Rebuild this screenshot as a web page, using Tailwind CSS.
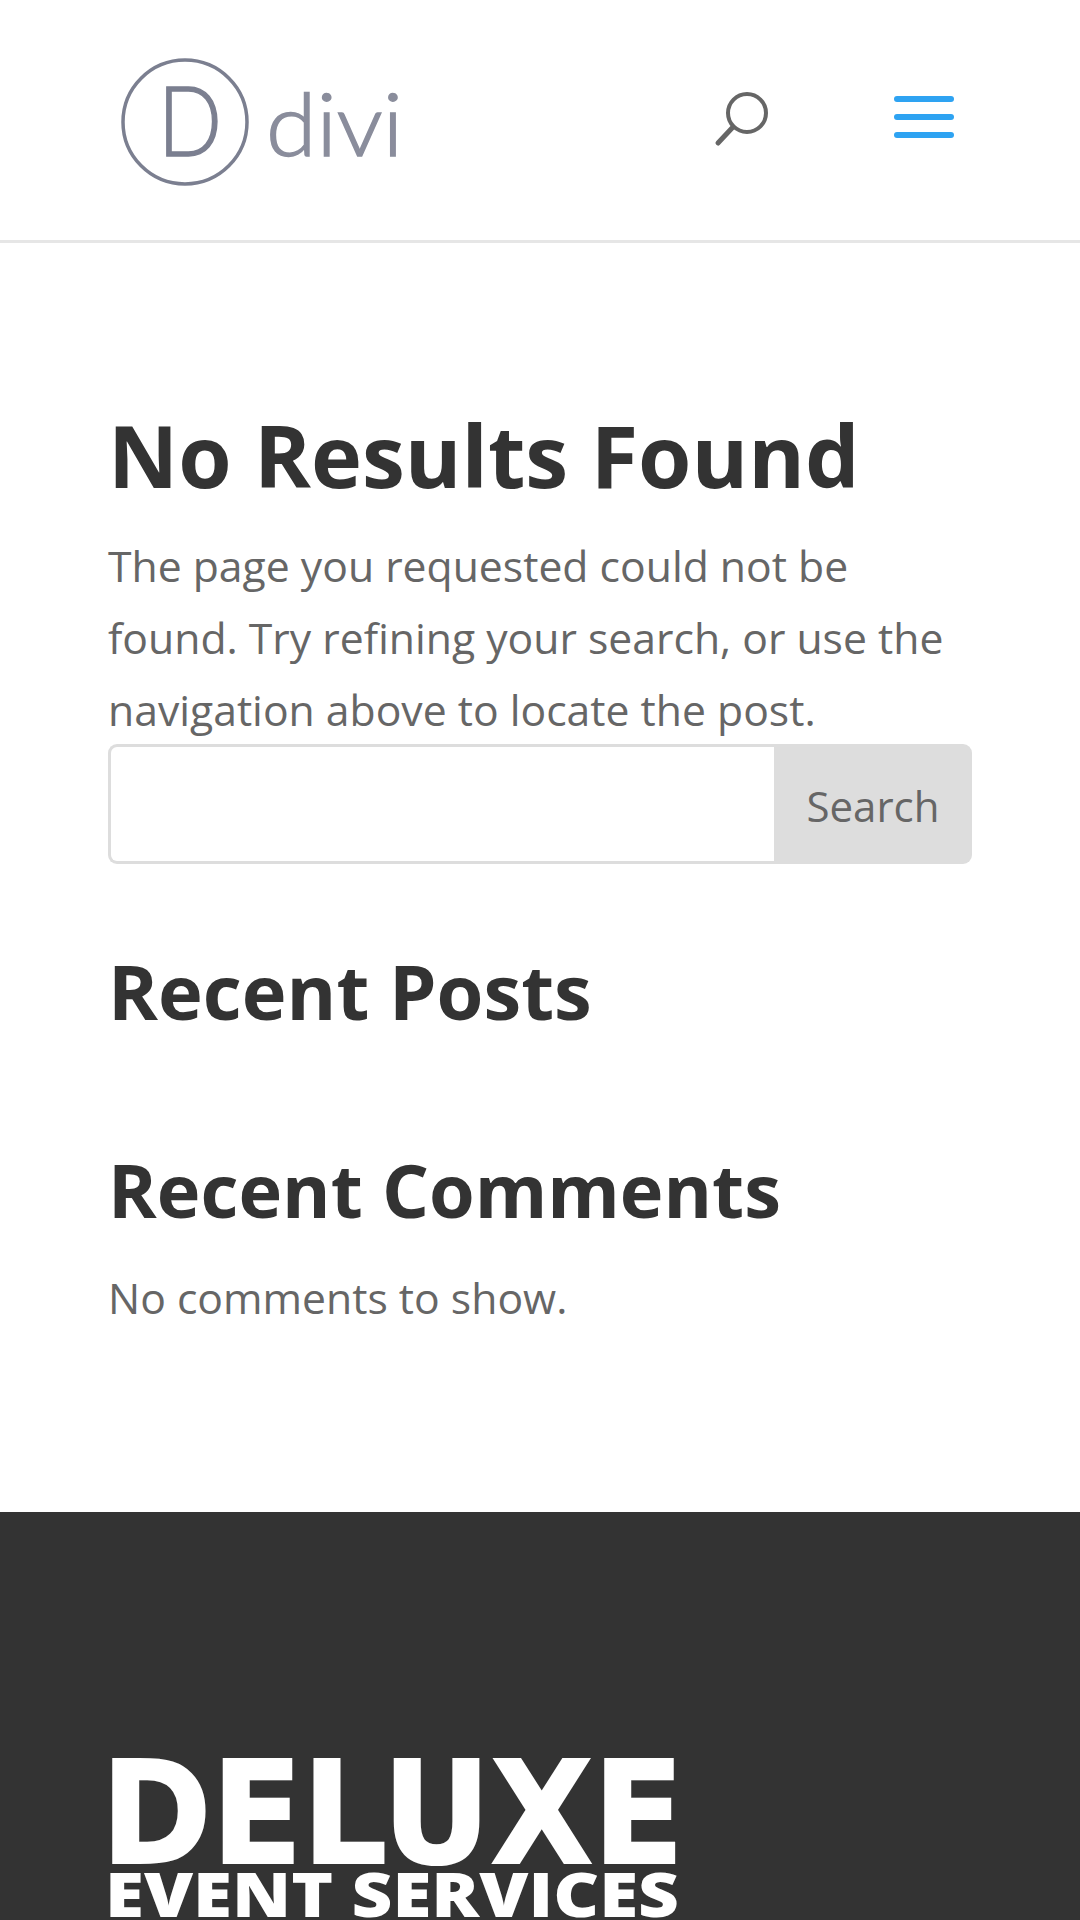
<!DOCTYPE html>
<html lang="en">
<head>
    <meta charset="UTF-8">
    <meta name="viewport" content="width=device-width, initial-scale=1.0">
    <title>No Results Found</title>
    <script src="https://cdn.jsdelivr.net/npm/@tailwindcss/browser@4"></script>
</head>
<body class="bg-white h-[1920px] overflow-hidden font-['Open_Sans',sans-serif] text-[#666]">
    <!-- Header -->
    <header class="h-[243px] border-b-[3px] border-[#e6e6e6] flex items-center pl-[120px] pr-[126px]">
        <svg class="w-[280px] h-[130px] mt-[4px] blur-[0.6px]" viewBox="0 0 280 130">
            <circle cx="65" cy="65" r="62" fill="none" stroke="#7b7f90" stroke-width="3.5"/>
            <text x="38" y="99" font-family="Lato" font-weight="300" font-size="96" fill="#7b7f90" stroke="#7b7f90" stroke-width="1.5" textLength="64" lengthAdjust="spacingAndGlyphs">D</text>
            <text x="146" y="99" font-family="Lato" font-weight="300" font-size="87" fill="#8a8d9c" stroke="#8a8d9c" stroke-width="1.5" textLength="137" lengthAdjust="spacingAndGlyphs">divi</text>
        </svg>
        <svg class="ml-auto w-[56px] h-[60px] mt-[2px]" viewBox="0 0 56 60" fill="none" stroke="#666" stroke-linecap="round">
            <circle cx="34" cy="22" r="19" stroke-width="4"/>
            <path d="M20 36 L5 52" stroke-width="5"/>
        </svg>
        <div class="ml-[125px] w-[60px] flex flex-col gap-[12px] mt-[-6px]">
            <div class="h-[6px] rounded-full bg-[#2ea3f2]"></div>
            <div class="h-[6px] rounded-full bg-[#2ea3f2]"></div>
            <div class="h-[6px] rounded-full bg-[#2ea3f2]"></div>
        </div>
    </header>

    <!-- Content -->
    <main class="h-[1269px] px-[108px] pt-[157px]">
        <h1 class="text-[86.3px] leading-[110px] font-bold text-[#333]">No Results Found</h1>
        <p class="mt-[20px] text-[42.7px] leading-[72px]">The page you requested could not be found. Try refining your search, or use the navigation above to locate the post.</p>
        <div class="flex w-[864px] h-[120px] mt-[-2px]">
            <div class="flex-1 bg-white border-[3px] border-r-0 border-[#ddd] rounded-l-[9px]"></div>
            <div class="w-[198px] pt-[2px] bg-[#ddd] rounded-r-[9px] flex items-center justify-center text-[42px]">Search</div>
        </div>
        <h2 class="mt-[82px] text-[75.8px] leading-[90px] font-bold text-[#333]">Recent Posts</h2>
        <h2 class="mt-[109px] text-[73.9px] leading-[90px] font-bold text-[#333]">Recent Comments</h2>
        <p class="mt-[27px] text-[42.7px] leading-[72px]">No comments to show.</p>
    </main>

    <!-- Footer -->
    <footer class="bg-[#333] h-[408px] pl-[108px] pt-[246px]">
        <svg class="w-[572px] h-[162px] overflow-visible" viewBox="0 0 572 162" fill="#fff">
            <text x="-7" y="105" font-family="DejaVu Sans" font-weight="700" font-size="142" textLength="583" lengthAdjust="spacingAndGlyphs" stroke="#fff" stroke-width="2">DELUXE</text>
            <text x="-3" y="159" font-family="Open Sans" font-weight="800" font-size="62" textLength="574" lengthAdjust="spacingAndGlyphs">EVENT SERVICES</text>
        </svg>
    </footer>
</body>
</html>
